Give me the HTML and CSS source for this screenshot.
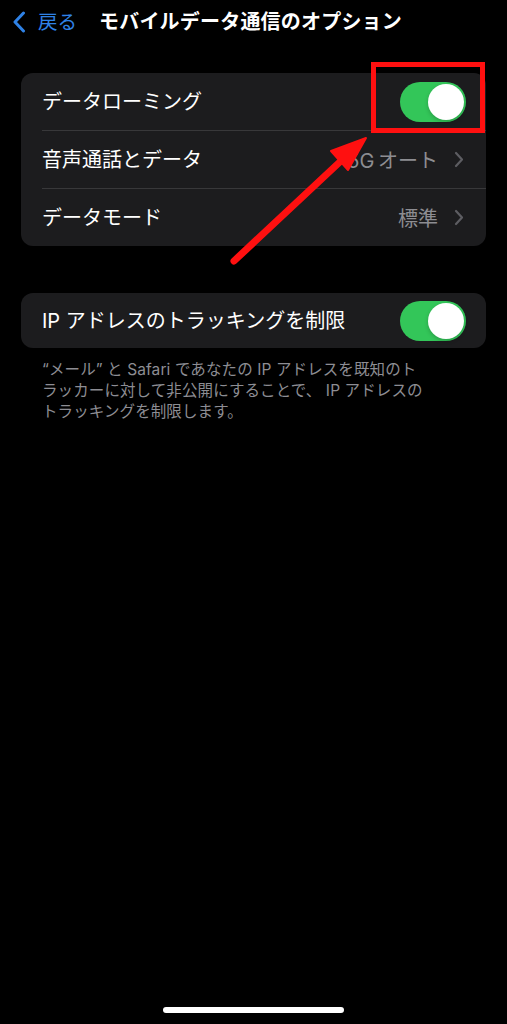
FILE: index.html
```
<!DOCTYPE html>
<html lang="ja">
<head>
<meta charset="utf-8">
<title>モバイルデータ通信のオプション</title>
<link rel="stylesheet" href="styles.css">
</head>
<body>
<div class="screen">
  <header class="nav">
    <div class="back">
      <svg class="back-chev" width="14" height="22" viewBox="0 0 14 22"><path d="M11.5 2 L3 11 L11.5 20" fill="none" stroke="#2f82e6" stroke-width="3" stroke-linecap="round" stroke-linejoin="round"/></svg>
      <span class="back-label">戻る</span>
    </div>
    <h1 class="title">モバイルデータ通信のオプション</h1>
  </header>

  <section class="group first">
    <div class="row sep">
      <span class="label">データローミング</span>
      <span class="toggle"><span class="knob"></span></span>
    </div>
    <div class="row sep">
      <span class="label">音声通話とデータ</span>
      <span class="value">5G&#8201;オート<svg class="chev" width="10" height="17" viewBox="0 0 10 17"><path d="M2 2 L8 8.5 L2 15" fill="none" stroke="#5d5d62" stroke-width="2.2" stroke-linecap="round" stroke-linejoin="round"/></svg></span>
    </div>
    <div class="row">
      <span class="label">データモード</span>
      <span class="value">標準<svg class="chev" width="10" height="17" viewBox="0 0 10 17"><path d="M2 2 L8 8.5 L2 15" fill="none" stroke="#5d5d62" stroke-width="2.2" stroke-linecap="round" stroke-linejoin="round"/></svg></span>
    </div>
  </section>

  <section class="group second">
    <div class="row single">
      <span class="label">IP アドレスのトラッキングを制限</span>
      <span class="toggle"><span class="knob"></span></span>
    </div>
  </section>
  <p class="footer">“メール” と Safari であなたの IP アドレスを既知のト<br>ラッカーに対して非公開にすることで、 IP アドレスの<br>トラッキングを制限します。</p>

  <div class="home"></div>

  <div class="highlight"></div>
  <svg class="arrow" width="507" height="300" viewBox="0 0 507 300">
    <line x1="234" y1="261" x2="343" y2="159" stroke="#ff1010" stroke-width="7" stroke-linecap="round"/>
    <polygon points="366,138 331,151 348,170" fill="#ff1010" stroke="#ff1010" stroke-width="2" stroke-linejoin="round"/>
  </svg>
</div>
</body>
</html>
```
FILE: styles.css
```
* { box-sizing: border-box; }
html, body { margin: 0; padding: 0; background: #000; }
body {
  font-family: Inter, "Noto Sans CJK JP", sans-serif;
  color: #fff;
}
.screen {
  position: relative;
  width: 507px;
  min-height: 1024px;
  display: flex;
  flex-direction: column;
}
.nav {
  height: 44px;
  display: flex;
  align-items: center;
  padding-left: 12px;
}
.back {
  display: flex;
  align-items: center;
  gap: 12px;
  color: #2f82e6;
}
.back-chev { display: block; }
.back-label { font-size: 19.5px; line-height: 24px; }
.title {
  margin: 0 0 0 22px;
  font-size: 20px;
  font-weight: 700;
  line-height: 24px;
  letter-spacing: 0.2px;
}
.group {
  margin: 0 21px;
  background: #1c1c1e;
  border-radius: 12px;
}
.group.first { margin-top: 29px; }
.group.second { margin-top: 47px; }
.row {
  height: 57px;
  margin-left: 21px;
  padding-right: 20px;
  display: flex;
  align-items: center;
  justify-content: space-between;
}
.row.sep { height: 58px; border-bottom: 1px solid #38383a; }
.row.single { height: 55px; }
.label { font-size: 20px; line-height: 26px; }
.value {
  display: flex;
  align-items: center;
  gap: 16px;
  font-size: 20px;
  color: #8d8d92;
  padding-right: 2px;
}
.chev { display: block; }
.toggle {
  position: relative;
  width: 66px;
  height: 40px;
  border-radius: 20px;
  background: #33c659;
  display: flex;
  align-items: center;
  justify-content: flex-end;
  padding-right: 2px;
}
.knob {
  width: 36px;
  height: 36px;
  border-radius: 50%;
  background: #fff;
  box-shadow: 0 2px 4px rgba(0,0,0,0.2);
}
.footer {
  margin: 11px 0 0 42px;
  font-size: 15.5px;
  line-height: 21px;
  color: #8d8d93;
  letter-spacing: 0.1px;
}
.home {
  margin: auto auto 11px;
  width: 181px;
  height: 6px;
  border-radius: 3px;
  background: #fff;
}
.highlight {
  position: absolute;
  left: 371px;
  top: 62px;
  width: 114px;
  height: 71px;
  border: 5px solid #ff1010;
}
.arrow {
  position: absolute;
  left: 0;
  top: 0;
}
```
